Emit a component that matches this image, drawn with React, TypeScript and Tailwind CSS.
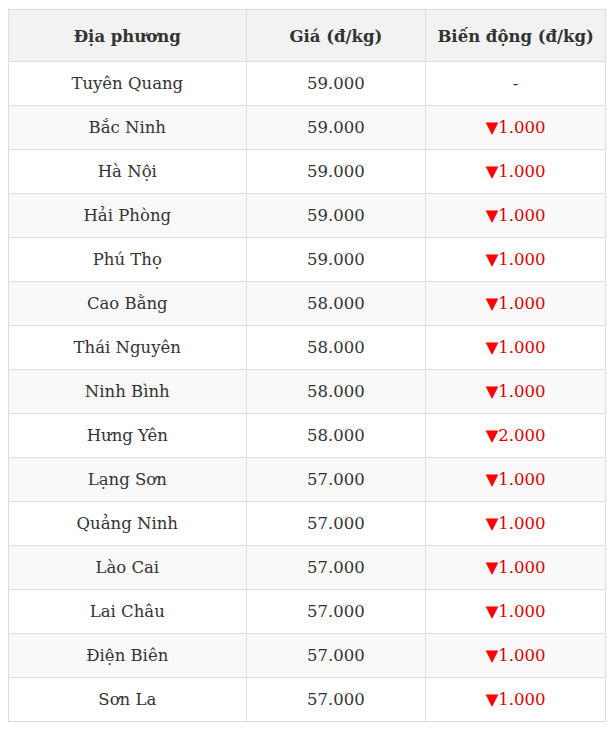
import React from "react";

const rows: [string, string, string | null][] = [
  ["Tuyên Quang", "59.000", null],
  ["Bắc Ninh", "59.000", "1.000"],
  ["Hà Nội", "59.000", "1.000"],
  ["Hải Phòng", "59.000", "1.000"],
  ["Phú Thọ", "59.000", "1.000"],
  ["Cao Bằng", "58.000", "1.000"],
  ["Thái Nguyên", "58.000", "1.000"],
  ["Ninh Bình", "58.000", "1.000"],
  ["Hưng Yên", "58.000", "2.000"],
  ["Lạng Sơn", "57.000", "1.000"],
  ["Quảng Ninh", "57.000", "1.000"],
  ["Lào Cai", "57.000", "1.000"],
  ["Lai Châu", "57.000", "1.000"],
  ["Điện Biên", "57.000", "1.000"],
  ["Sơn La", "57.000", "1.000"],
];

export default function App() {
  return (
    <div className="bg-white pl-2 pt-[9px] text-[#333]" style={{ fontFamily: '"DejaVu Serif", serif' }}>
      <table className="w-[598px] border-collapse text-center text-[16.5px]">
        <thead>
          <tr className="h-[52px] bg-[#f2f2f2]">
            <th className="w-[238px] border border-[#ddd] pt-[3px] font-bold">Địa phương</th>
            <th className="w-[180px] border border-[#ddd] pt-[3px] font-bold">Giá (đ/kg)</th>
            <th className="w-[180px] border border-[#ddd] pt-[3px] font-bold">Biến động (đ/kg)</th>
          </tr>
        </thead>
        <tbody>
          {rows.map(([name, price, change], i) => (
            <tr key={name} className={`h-[44px] ${i % 2 === 1 ? "bg-[#f9f9f9]" : "bg-white"}`}>
              <td className="border border-[#ddd] pt-[2px]">{name}</td>
              <td className="border border-[#ddd] pt-[2px]">{price}</td>
              <td className="border border-[#ddd] pt-[2px]">
                {change ? (
                  <span className="text-[#e00000]">
                    <span className="text-[#ff0000]">▼</span>
                    {change}
                  </span>
                ) : (
                  "-"
                )}
              </td>
            </tr>
          ))}
        </tbody>
      </table>
    </div>
  );
}
